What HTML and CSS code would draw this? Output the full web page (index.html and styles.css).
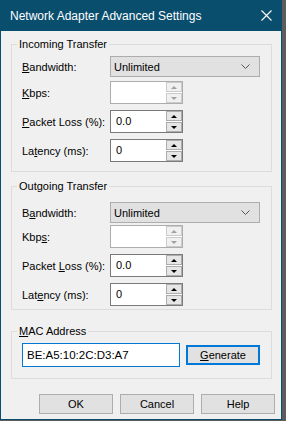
FILE: index.html
```html
<!DOCTYPE html>
<html>
<head>
<meta charset="utf-8">
<link rel="stylesheet" href="styles.css">
</head>
<body>
<div class="window">
  <div class="titlebar">
    <span class="title">Network Adapter Advanced Settings</span>
    <svg class="close" width="11" height="11" viewBox="0 0 11 11"><path d="M0.5 0.5 L10.5 10.5 M10.5 0.5 L0.5 10.5" stroke="#fff" stroke-width="1.1" fill="none"/></svg>
  </div>
  <div class="content">
    <fieldset class="group g1">
      <legend>Incoming Transfer</legend>
      <div class="rows">
        <div class="row"><span class="lbl"><u>B</u>andwidth:</span>
          <div class="combo"><span>Unlimited</span><svg class="chev" width="9" height="5" viewBox="0 0 9 5"><path d="M0.5 0.5 L4.5 4.5 L8.5 0.5" stroke="#555" stroke-width="1" fill="none"/></svg></div></div>
        <div class="row r-spin"><span class="lbl"><u>K</u>bps:</span>
          <div class="spin disabled"><div class="field"></div><div class="sbtns"><div class="sb"><i class="up"></i></div><div class="sb"><i class="down"></i></div></div></div></div>
        <div class="row r-spin2"><span class="lbl"><u>P</u>acket Loss (%):</span>
          <div class="spin"><div class="field">0.0</div><div class="sbtns"><div class="sb"><i class="up"></i></div><div class="sb"><i class="down"></i></div></div></div></div>
        <div class="row r-spin2"><span class="lbl">La<u>t</u>ency (ms):</span>
          <div class="spin"><div class="field">0</div><div class="sbtns"><div class="sb"><i class="up"></i></div><div class="sb"><i class="down"></i></div></div></div></div>
      </div>
    </fieldset>
    <fieldset class="group g2">
      <legend>Outgoing Transfer</legend>
      <div class="rows">
        <div class="row"><span class="lbl">B<u>a</u>ndwidth:</span>
          <div class="combo"><span>Unlimited</span><svg class="chev" width="9" height="5" viewBox="0 0 9 5"><path d="M0.5 0.5 L4.5 4.5 L8.5 0.5" stroke="#555" stroke-width="1" fill="none"/></svg></div></div>
        <div class="row r-spin"><span class="lbl">Kbp<u>s</u>:</span>
          <div class="spin disabled"><div class="field"></div><div class="sbtns"><div class="sb"><i class="up"></i></div><div class="sb"><i class="down"></i></div></div></div></div>
        <div class="row r-spin2"><span class="lbl">Packet <u>L</u>oss (%):</span>
          <div class="spin"><div class="field">0.0</div><div class="sbtns"><div class="sb"><i class="up"></i></div><div class="sb"><i class="down"></i></div></div></div></div>
        <div class="row r-spin2"><span class="lbl">Lat<u>e</u>ncy (ms):</span>
          <div class="spin"><div class="field">0</div><div class="sbtns"><div class="sb"><i class="up"></i></div><div class="sb"><i class="down"></i></div></div></div></div>
      </div>
    </fieldset>
    <fieldset class="group mac">
      <legend><u>M</u>AC Address</legend>
      <div class="macrow">
        <div class="macfield">BE:A5:10:2C:D3:A7</div>
        <div class="btn default"><u>G</u>enerate</div>
      </div>
    </fieldset>
    <div class="buttons">
      <div class="btn">OK</div>
      <div class="btn">Cancel</div>
      <div class="btn">Help</div>
    </div>
  </div>
</div>
</body>
</html>
```

FILE: styles.css
```css
html, body {
  margin: 0;
  padding: 0;
}
body {
  background: #5c5c5c;
  width: 286px;
  height: 421px;
  font-family: "Liberation Sans", Arial, sans-serif;
  font-size: 11px;
  color: #000;
}
.window {
  width: 282px;
  height: 420px;
  display: flex;
  flex-direction: column;
  background: #f0f0f0;
}
.titlebar {
  height: 31px;
  background: #0a4e6e;
  display: flex;
  align-items: center;
  justify-content: space-between;
  padding: 0 10px 0 10px;
  flex: none;
}
.title {
  color: #fff;
  font-size: 12px;
  line-height: 16px;
}
.close {
  display: block;
}
.content {
  flex: 1;
  border: 1px solid #0a4e6e;
  border-top: none;
  padding: 5px 9px 0 10px;
  display: flex;
  flex-direction: column;
}
.group {
  margin: 0;
  padding: 0;
  border: 1px solid #dcdcdc;
  min-width: 0;
}
.group legend {
  margin-left: 5px;
  padding: 0 2px;
  line-height: 16px;
  height: 16px;
}
.g2 {
  margin-top: 6px;
}
.mac {
  margin-top: 13px;
}
.rows {
  display: flex;
  flex-direction: column;
  padding: 4px 0 9px 10px;
}
.g2 .rows {
  padding-top: 8px;
  padding-bottom: 3px;
}
.row {
  display: flex;
  align-items: center;
}
.r-spin {
  margin-top: 4px;
}
.g2 .r-spin {
  margin-top: 2px;
}
.r-spin2 {
  margin-top: 6px;
}
.lbl {
  width: 88px;
  flex: none;
}
.combo {
  width: 150px;
  height: 21px;
  box-sizing: border-box;
  border: 1px solid #adadad;
  background: #e1e1e1;
  display: flex;
  align-items: center;
  justify-content: space-between;
  padding: 0 9px 0 3px;
}
.spin {
  width: 73px;
  height: 23px;
  box-sizing: border-box;
  border: 1px solid #7a7a7a;
  background: #fff;
  display: flex;
}
.spin.disabled {
  border-color: #adadad;
}
.field {
  flex: 1;
  padding: 4px 0 0 5px;
  line-height: 13px;
}
.sbtns {
  width: 16px;
  display: flex;
  flex-direction: column;
  gap: 1px;
}
.sb {
  flex: 1;
  box-sizing: border-box;
  border: 1px solid #adadad;
  background: #e6e6e6;
  display: flex;
  align-items: center;
  justify-content: center;
}
.sb i {
  display: block;
  width: 0;
  height: 0;
  border-left: 3px solid transparent;
  border-right: 3px solid transparent;
}
.sb i.up {
  border-bottom: 3px solid #000;
}
.sb i.down {
  border-top: 3px solid #000;
}
.disabled .sb i.up {
  border-bottom-color: #a0a0a0;
}
.disabled .sb i.down {
  border-top-color: #a0a0a0;
}
.disabled .sb {
  border-color: #cccccc;
  background: #f0f0f0;
}
.macrow {
  display: flex;
  align-items: center;
  padding: 4px 0 11px 10px;
  gap: 6px;
}
.macfield {
  width: 158px;
  height: 24px;
  box-sizing: border-box;
  border: 1px solid #0078d7;
  background: #fff;
  padding: 0 0 0 4px;
  line-height: 22px;
  font-size: 11.5px;
}
.btn {
  width: 74px;
  height: 20px;
  box-sizing: border-box;
  border: 1px solid #adadad;
  background: #e1e1e1;
  display: flex;
  align-items: center;
  justify-content: center;
}
.btn.default {
  border-color: #0078d7;
  box-shadow: inset 0 0 0 1px #0078d7;
}
.buttons {
  display: flex;
  justify-content: flex-end;
  gap: 7px;
  margin-top: 15px;
  margin-right: -3px;
}
```
